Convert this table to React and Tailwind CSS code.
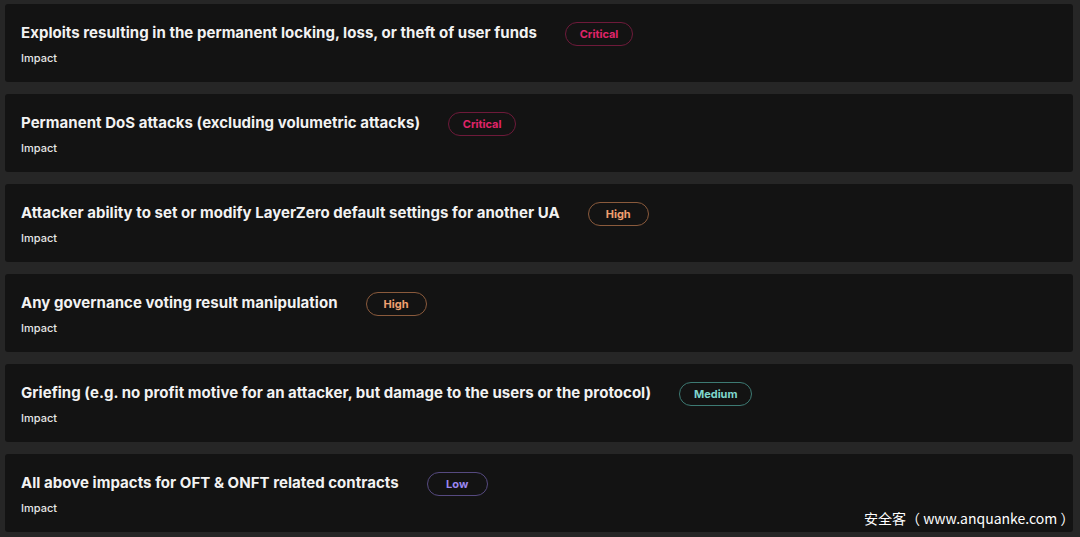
import React from "react";

const items = [
  { title: "Exploits resulting in the permanent locking, loss, or theft of user funds", level: "Critical" },
  { title: "Permanent DoS attacks (excluding volumetric attacks)", level: "Critical" },
  { title: "Attacker ability to set or modify LayerZero default settings for another UA", level: "High" },
  { title: "Any governance voting result manipulation", level: "High" },
  { title: "Griefing (e.g. no profit motive for an attacker, but damage to the users or the protocol)", level: "Medium" },
  { title: "All above impacts for OFT & ONFT related contracts", level: "Low" },
];

const badgeCls = {
  Critical: "border-[#6e1a3a] text-[#e0246a] w-[68px]",
  High: "border-[#8a5a3c] text-[#f0a070] w-[61px]",
  Medium: "border-[#3d7a73] text-[#7fd6cc] w-[73px]",
  Low: "border-[#564a80] text-[#9b87f0] w-[61px]",
};

export default function App() {
  return (
    <div className="w-[1080px] h-[537px] bg-[#262626] overflow-hidden relative" style={{ fontFamily: "Inter, 'Noto Sans', sans-serif" }}>
      <div className="flex flex-col gap-[12px] pt-[4px] pl-[5px] pr-[7px]">
        {items.map((it, i) => (
          <div key={i} className="h-[78px] bg-[#131313] rounded-[3px] pl-[16px] pt-[17px]">
            <div className="flex items-center h-[24px]">
              <span className="text-[15px] font-bold text-[#f2f2f2] tracking-[0.04px]">{it.title}</span>
              <span className={`ml-[28px] mt-[2px] h-[24px] rounded-full border flex items-center justify-center text-[11px] font-bold ${badgeCls[it.level]}`}>{it.level}</span>
            </div>
            <div className="text-[11px] font-medium text-[#e6e6e6] mt-[5px]">Impact</div>
          </div>
        ))}
      </div>
      <div className="absolute left-[864px] top-[508px] text-[14px] text-white" style={{ fontFamily: "'Microsoft YaHei', 'Noto Sans CJK SC', sans-serif" }}>
        安全客（ www.anquanke.com ）
      </div>
    </div>
  );
}
